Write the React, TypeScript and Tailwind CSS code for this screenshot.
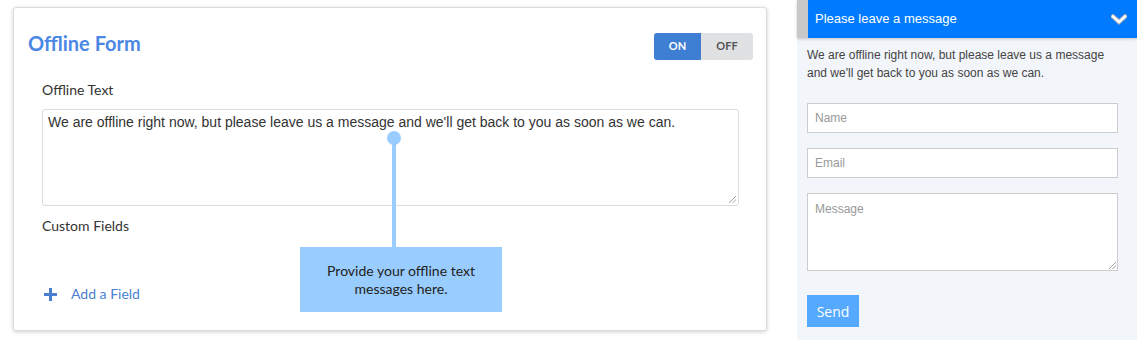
import React from 'react';

function Toggle() {
  return (
    <div className="flex h-[27px] overflow-hidden rounded-[3px] text-[11px] font-bold">
      <div className="flex w-[47px] items-center justify-center bg-[#3f7fd3] text-white">ON</div>
      <div className="flex w-[52px] items-center justify-center bg-[#e0e1e3] text-[#555]">OFF</div>
    </div>
  );
}

function OfflineForm() {
  return (
    <div className="relative ml-[13px] mt-[7px] h-[324px] w-[754px] rounded-[3px] border border-[#dcdcdc] bg-white shadow-[0_1px_4px_rgba(0,0,0,0.18)] font-['Lato',sans-serif]">
      <div className="flex items-start justify-between pl-[14px] pr-[13px] pt-[24px]">
        <h1 className="text-[20px] font-bold leading-[22px] text-[#4b88e5]">Offline Form</h1>
        <div className="mt-[1px]">
          <Toggle />
        </div>
      </div>

      <div className="ml-[28px] mt-[20px] w-[697px]">
        <div className="text-[14px] leading-[20px] text-[#333]">Offline Text</div>
        <div className="relative mt-[9px] h-[97px] rounded-[3px] border border-[#dcdcdc] px-[5px] pt-[2px] font-['Liberation_Sans',Arial,sans-serif] text-[14px] leading-[20px] text-[#333]">
          We are offline right now, but please leave us a message and we'll get back to you as soon as we can.
          <ResizeGrip className="absolute bottom-[2px] right-[2px]" />
        </div>
        <div className="mt-[10px] text-[14px] leading-[20px] text-[#333]">Custom Fields</div>
        <div className="mt-[48px] flex items-center gap-[14px] text-[14px] leading-[20px] text-[#4a7fcf]">
          <svg width="13" height="13" viewBox="0 0 13 13" className="ml-[2px]">
            <rect x="5" y="0" width="3" height="13" fill="#4a7fcf" />
            <rect x="0" y="5" width="13" height="3" fill="#4a7fcf" />
          </svg>
          <span>Add a Field</span>
        </div>
      </div>

      {/* callout */}
      <div className="absolute left-[373px] top-[123px] h-[14px] w-[14px] rounded-full bg-[#9acdff]" />
      <div className="absolute left-[378px] top-[130px] h-[110px] w-[4px] bg-[#9acdff]" />
      <div className="absolute left-[286px] top-[239px] flex h-[65px] w-[202px] items-center justify-center bg-[#9acdff] px-4 text-center text-[14px] leading-[18px] text-[#222]">
        Provide your offline text messages here.
      </div>
    </div>
  );
}

function ResizeGrip({ className }: { className?: string }) {
  return (
    <svg width="8" height="8" viewBox="0 0 8 8" className={className}>
      <line x1="1" y1="8" x2="8" y2="1" stroke="#888" strokeWidth="0.8" />
      <line x1="4.5" y1="8" x2="8" y2="4.5" stroke="#888" strokeWidth="0.8" />
    </svg>
  );
}

function Widget() {
  return (
    <div className="h-[340px] w-[340px] bg-[#f2f5fa] font-['Liberation_Sans',Arial,sans-serif]">
      <div className="flex h-[38px] shadow-[0_1px_3px_rgba(0,0,0,0.2)]">
        <div className="w-[11px] bg-[#c8c8c8]" />
        <div className="flex flex-1 items-center justify-between bg-[#007bff] pl-[7px] pr-[10px] text-[13px] text-white">
          <span>Please leave a message</span>
          <svg width="16" height="11" viewBox="0 0 16 11">
            <path d="M2 2.5 L8 8 L14 2.5" fill="none" stroke="#9aa8b8" strokeWidth="4.5" strokeLinecap="square" />
            <path d="M2 2.5 L8 8 L14 2.5" fill="none" stroke="#fff" strokeWidth="2.6" strokeLinecap="square" />
          </svg>
        </div>
      </div>
      <div className="px-[10px]">
        <p className="mt-[8px] text-[12px] leading-[18px] text-[#444]">
          We are offline right now, but please leave us a message and we'll get back to you as soon as we can.
        </p>
        <div className="mt-[21px] flex h-[30px] w-[311px] items-center border border-[#ccc] bg-white px-[7px] text-[12px] text-[#999]">Name</div>
        <div className="mt-[15px] flex h-[30px] w-[311px] items-center border border-[#ccc] bg-white px-[7px] text-[12px] text-[#999]">Email</div>
        <div className="relative mt-[15px] h-[78px] w-[311px] border border-[#ccc] bg-white px-[7px] pt-[6px] text-[12px] text-[#999]">
          Message
          <ResizeGrip className="absolute bottom-[1px] right-[1px]" />
        </div>
        <button className="mt-[24px] flex h-[32px] w-[52px] items-center justify-center bg-[#55aaff] font-['Open_Sans',sans-serif] text-[14px] text-white">
          Send
        </button>
      </div>
    </div>
  );
}

export default function App() {
  return (
    <div className="flex h-[340px] w-[1137px] overflow-hidden bg-white">
      <div className="w-[797px] shrink-0">
        <OfflineForm />
      </div>
      <Widget />
    </div>
  );
}
